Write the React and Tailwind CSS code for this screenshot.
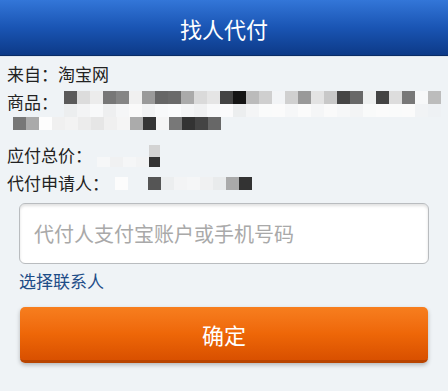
const row1 = [
  "#5a5a5a", "#dcdcdc", "#ececec", "#777", "#858585", "#f0f0f0", "#9a9a9a", "#666",
  "#6a6a6a", "#aaa", "#dadada", "#e5e5e5", "#444", "#141414", "#bbb", "#cfcfcf",
  "#f2f4f6", "#d0d0d0", "#999", "#e3e3e3", "#c8c8c8", "#454545", "#686868", "#eef0f0",
  "#444", "#ddd", "#787878", "#f7f8f9", "#bcbcbc",
];

const row2 = [
  "#eceeef", "#f3f4f5", "#f8f9fa", "#eeeff0", "#f5f6f7", "#fafafa", "#f2f3f4", "#f8f9fa",
  "#fafbfc", "#f4f5f6", "#f0f1f2", "#f8f9fa", "#fbfbfc", "#eceeef", "#f4f5f6", "#fafbfb",
  "#fbfbfb", "#f6f7f8", "#fbfbfb", "#f5f6f7", "#fafafa", "#f6f7f8", "#f3f4f5", "#f9fafa",
  "#fbfbfb", "#fafbfb", "#fbfbfb", "#f1f3f5", "#eef1f4",
];

const row3 = [
  "#777", "#aaa", "#fdfdfd", "#f0f0f0", "#f3f3f3", "#ececec", "#e6e6e6", "#f0f0f0",
  "#f5f5f5", "#ababab", "#353535", "#f5f5f5", "#787878", "#333", "#444", "#676767",
];

function Cells({ colors }) {
  return (
    <div className="flex">
      {colors.map((c, i) => (
        <div key={i} className="w-[13px] h-[13px]" style={{ backgroundColor: c }} />
      ))}
    </div>
  );
}

export default function App() {
  return (
    <div className="w-[448px] h-[391px] bg-[#eff3f6] overflow-hidden font-['Noto_Sans_CJK_SC','Noto_Sans',sans-serif] text-[#222]">

      {/* Header */}
      <div className="h-[56px] flex items-center justify-center bg-gradient-to-b from-[#3376d8] via-[#1a55b4] to-[#0d3a88] border-b border-[#0a2c66] shadow-[0_1px_0_#dfe6ee]">
        <span className="text-[22px] text-white leading-none">找人代付</span>
      </div>

      {/* Info */}
      <div className="px-[7px] pt-[4px] text-[17px]">
        <div className="h-[28px] leading-[28px]">来自：淘宝网</div>

        <div className="flex h-[29px]">
          <div className="w-[58px] leading-[28px]">商品：</div>
          <div className="mt-[3px]">
            <Cells colors={row1} />
            <Cells colors={row2} />
          </div>
        </div>
        <div className="ml-[6px]">
          <Cells colors={row3} />
        </div>

        <div className="mt-[11px] h-[28px] flex items-center">
          <span className="leading-[28px]">应付总价：</span>
          <div className="flex items-end ml-[5px] h-[24px]">
            <div className="w-[13px] h-[10px] bg-[#f6f7f8]" />
            <div className="w-[13px] h-[10px] bg-[#f0f1f2]" />
            <div className="w-[13px] h-[10px] bg-[#f5f6f7]" />
            <div className="w-[13px] h-[10px] bg-[#f2f3f4]" />
            <div className="w-[11px] flex flex-col">
              <div className="h-[12px] bg-[#d3d3d3]" />
              <div className="h-[10px] bg-[#333]" />
            </div>
          </div>
        </div>

        <div className="h-[28px] flex items-center">
          <span className="leading-[28px]">代付申请人：</span>
          <div className="flex items-center ml-[6px]">
            <div className="w-[13px] h-[13px] bg-[#fcfcfc]" />
            <div className="w-[20px] h-[13px]" />
            <div className="w-[13px] h-[13px] bg-[#555]" />
            <div className="w-[13px] h-[13px] bg-[#eceeef]" />
            <div className="w-[13px] h-[13px] bg-[#f3f4f5]" />
            <div className="w-[13px] h-[13px] bg-[#f5f6f7]" />
            <div className="w-[13px] h-[13px] bg-[#f0f1f2]" />
            <div className="w-[13px] h-[13px] bg-[#e9ebec]" />
            <div className="w-[13px] h-[13px] bg-[#aaa]" />
            <div className="w-[13px] h-[13px] bg-[#333]" />
          </div>
        </div>
      </div>

      {/* Input */}
      <div className="mt-[6px] mx-[19px] h-[61px] bg-white border border-[#b9bcbf] rounded-[6px] shadow-[inset_0_2px_3px_rgba(0,0,0,0.12)] flex items-center px-[14px]">
        <span className="text-[20px] text-[#a9a9a9]">代付人支付宝账户或手机号码</span>
      </div>

      <div className="mt-[4px] px-[19px] h-[26px] leading-[26px] text-[17px] text-[#1d4c87]">
        选择联系人
      </div>

      {/* Button */}
      <div className="mt-[13px] mx-[20px] h-[56px] rounded-[5px] bg-gradient-to-b from-[#f77e1e] via-[#ee6708] to-[#d95000] border-b-[3px] border-[#b84400] shadow-[0_2px_4px_rgba(0,0,0,0.25)] flex items-center justify-center">
        <span className="text-[22px] text-white leading-none">确定</span>
      </div>
    </div>
  );
}
